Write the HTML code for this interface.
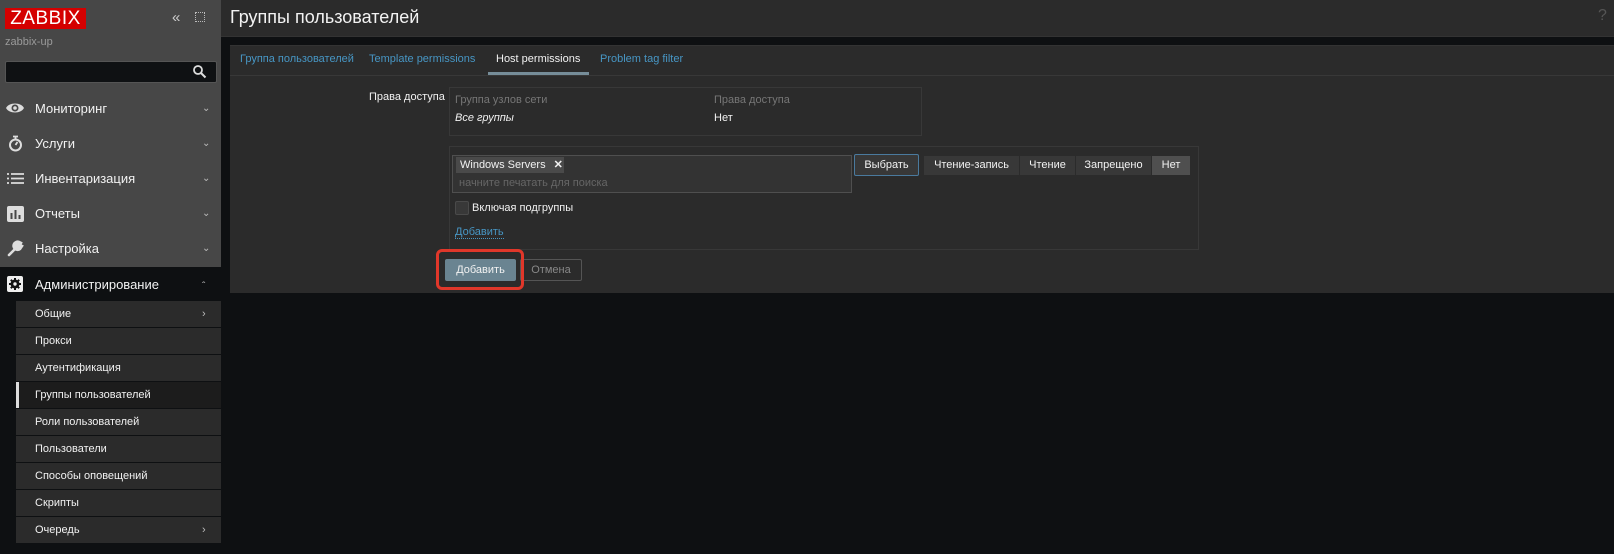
<!DOCTYPE html>
<html><head><meta charset="utf-8"><style>
*{margin:0;padding:0;box-sizing:border-box}
body{width:1614px;height:554px;background:#0e1012;font-family:"Liberation Sans",Arial,sans-serif;position:relative;overflow:hidden;color:#f2f2f2}
.a{position:absolute;white-space:nowrap}
.side{left:0;top:0;width:221px;height:267px;background:#474747}
.mi{left:0;width:221px;height:35px;font-size:13px;line-height:35px}
.mi span.t{position:absolute;left:35px}
.mi .c{position:absolute;left:202px;font-size:10px;color:#bbb}
.sub{left:16px;width:205px;height:26px;background:#2b2b2b;font-size:11px;line-height:26px}
.sub span{position:absolute;left:19px}
.tab{top:53px;font-size:11px;color:#4796c4}
.seg{top:155px;height:21px;border:1px solid #2b2b2b;background:#383838;font-size:11px;line-height:19px;text-align:center;color:#f2f2f2}
</style></head><body>
<div class="a side"></div>
<div class="a" style="left:5px;top:8px;width:81px;height:21px;background:#d40000;color:#fff;font-size:19px;line-height:21px;text-align:center;letter-spacing:0.5px">ZABBIX</div>
<div class="a" style="left:172px;top:9px;font-size:15px;color:#ccc">&#171;</div>
<div class="a" style="left:195px;top:12px;width:10px;height:10px;border:1px dotted #bbb"></div>
<div class="a" style="left:5px;top:36px;font-size:11px;color:#9a9a9a">zabbix-up</div>
<div class="a" style="left:5px;top:61px;width:212px;height:22px;background:#0f1113;border:1px solid #555;border-radius:2px"></div>
<svg class="a" style="left:192px;top:64px" width="15" height="15" viewBox="0 0 15 15"><circle cx="6" cy="6" r="4" stroke="#ddd" stroke-width="1.8" fill="none"/><path d="M9 9l4.5 4.5" stroke="#ddd" stroke-width="2"/></svg>

<div class="a mi" style="top:91px"><svg class="a" style="left:5px;top:10px" width="20" height="14" viewBox="0 0 20 14"><path d="M1 7C4 1 16 1 19 7C16 13 4 13 1 7Z" fill="#ddd"/><circle cx="10" cy="7" r="3.5" fill="#474747"/><circle cx="10" cy="7" r="1.8" fill="#ddd"/></svg><span class="t">Мониторинг</span><span class="c">&#8964;</span></div>
<div class="a mi" style="top:126px"><svg class="a" style="left:8px;top:9px" width="15" height="17" viewBox="0 0 15 17"><circle cx="7.5" cy="10" r="5.5" stroke="#ddd" stroke-width="2" fill="none"/><path d="M5 1.5h5M7.5 2v3M7.5 10l2-3" stroke="#ddd" stroke-width="1.8"/></svg><span class="t">Услуги</span><span class="c">&#8964;</span></div>
<div class="a mi" style="top:161px"><svg class="a" style="left:7px;top:12px" width="17" height="11" viewBox="0 0 17 11"><path d="M0 1h2M4 1h13M0 5.5h2M4 5.5h13M0 10h2M4 10h13" stroke="#ddd" stroke-width="1.8"/></svg><span class="t">Инвентаризация</span><span class="c">&#8964;</span></div>
<div class="a mi" style="top:196px"><svg class="a" style="left:7px;top:10px" width="17" height="16" viewBox="0 0 17 16"><rect width="17" height="16" rx="2" fill="#ddd"/><path d="M4.5 13V7M8.5 13V4M12.5 13V9" stroke="#474747" stroke-width="2"/></svg><span class="t">Отчеты</span><span class="c">&#8964;</span></div>
<div class="a mi" style="top:231px"><svg class="a" style="left:7px;top:9px" width="17" height="17" viewBox="0 0 17 17"><path d="M2 15L9 8M7 4a4 4 0 0 0 6 5l2 -3-2-1 1-2-2-1a4 4 0 0 0-5 2Z" stroke="#ddd" stroke-width="2.6" fill="#ddd" stroke-linecap="round"/></svg><span class="t">Настройка</span><span class="c">&#8964;</span></div>
<div class="a mi" style="top:267px;height:34px;background:#0e1012"><svg class="a" style="left:7px;top:9px" width="16" height="16" viewBox="0 0 16 16"><rect width="16" height="16" rx="2" fill="#eee"/><circle cx="8" cy="8" r="4.5" fill="#111"/><circle cx="8" cy="8" r="1.7" fill="#eee"/><path d="M8 2v3M8 11v3M2 8h3M11 8h3M3.8 3.8l2 2M10.2 10.2l2 2M3.8 12.2l2-2M10.2 5.8l2-2" stroke="#111" stroke-width="2"/></svg><span class="t">Администрирование</span><span class="c" style="top:2px">&#710;</span></div>

<div class="a sub" style="top:301px"><span>Общие</span><b style="position:absolute;left:186px;font-weight:normal;color:#bbb">&#8250;</b></div>
<div class="a sub" style="top:328px"><span>Прокси</span></div>
<div class="a sub" style="top:355px"><span>Аутентификация</span></div>
<div class="a sub" style="top:382px;background:#1c1c1c;border-left:3px solid #ddd"><span style="left:16px">Группы пользователей</span></div>
<div class="a sub" style="top:409px"><span>Роли пользователей</span></div>
<div class="a sub" style="top:436px"><span>Пользователи</span></div>
<div class="a sub" style="top:463px"><span>Способы оповещений</span></div>
<div class="a sub" style="top:490px"><span>Скрипты</span></div>
<div class="a sub" style="top:517px"><span>Очередь</span><b style="position:absolute;left:186px;font-weight:normal;color:#bbb">&#8250;</b></div>

<div class="a" style="left:221px;top:0;width:1393px;height:37px;background:#2b2b2b;border-bottom:1px solid #333"></div>
<div class="a" style="left:230px;top:7px;font-size:18px;color:#f2f2f2">Группы пользователей</div>
<div class="a" style="left:1598px;top:7px;font-size:16px;color:#555">?</div>

<div class="a" style="left:230px;top:45px;width:1384px;height:248px;background:#2b2b2b;border-top:1px solid #333"></div>
<div class="a" style="left:230px;top:75px;width:1384px;height:1px;background:#383838"></div>
<div class="a tab" style="left:240px">Группа пользователей</div>
<div class="a tab" style="left:369px">Template permissions</div>
<div class="a tab" style="left:496px;color:#f2f2f2">Host permissions</div>
<div class="a" style="left:488px;top:72px;width:101px;height:3px;background:#768d99"></div>
<div class="a tab" style="left:600px">Problem tag filter</div>

<div class="a" style="left:369px;top:91px;font-size:11px">Права доступа</div>
<div class="a" style="left:449px;top:87px;width:473px;height:49px;border:1px solid #383838"></div>
<div class="a" style="left:455px;top:94px;font-size:11px;color:#767676">Группа узлов сети</div>
<div class="a" style="left:714px;top:94px;font-size:11px;color:#767676">Права доступа</div>
<div class="a" style="left:455px;top:112px;font-size:11px;font-style:italic">Все группы</div>
<div class="a" style="left:714px;top:112px;font-size:11px">Нет</div>

<div class="a" style="left:449px;top:146px;width:750px;height:104px;border:1px solid #383838"></div>
<div class="a" style="left:452px;top:155px;width:400px;height:38px;background:#333;border:1px solid #4f4f4f"></div>
<div class="a" style="left:456px;top:157px;width:108px;height:16px;background:#4a4a4a;font-size:11px;line-height:16px;padding-left:4px">Windows Servers <b style="margin-left:5px">✕</b></div>
<div class="a" style="left:459px;top:177px;font-size:11px;color:#666">начните печатать для поиска</div>
<div class="a" style="left:854px;top:154px;width:65px;height:22px;background:#383838;border:1px solid #4a7a9e;border-radius:2px;font-size:11px;line-height:20px;text-align:center">Выбрать</div>
<div class="a seg" style="left:923px;width:97px">Чтение-запись</div>
<div class="a seg" style="left:1019px;width:57px">Чтение</div>
<div class="a seg" style="left:1075px;width:77px">Запрещено</div>
<div class="a seg" style="left:1151px;width:40px;background:#4f4f4f">Нет</div>
<div class="a" style="left:455px;top:201px;width:14px;height:14px;background:#383838;border:1px solid #4a4a4a;border-radius:2px"></div>
<div class="a" style="left:472px;top:202px;font-size:11px">Включая подгруппы</div>
<div class="a" style="left:455px;top:226px;font-size:11px;color:#4796c4;border-bottom:1px dotted #4796c4">Добавить</div>

<div class="a" style="left:445px;top:259px;width:71px;height:22px;background:#6a8491;border-radius:2px;font-size:11px;line-height:22px;text-align:center;color:#f2f2f2">Добавить</div>
<div class="a" style="left:520px;top:259px;width:62px;height:22px;border:1px solid #555;border-radius:2px;font-size:11px;line-height:20px;text-align:center;color:#888">Отмена</div>
<div class="a" style="left:436px;top:249px;width:88px;height:41px;border:3px solid #e0372a;border-radius:6px"></div>
</body></html>
